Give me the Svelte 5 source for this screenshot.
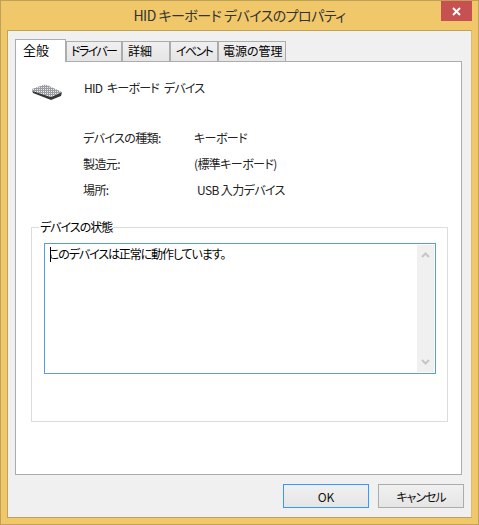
<script>
	const tabs = [
		{ label: '全般', active: true },
		{ label: 'ドライバー' },
		{ label: '詳細' },
		{ label: 'イベント' },
		{ label: '電源の管理' }
	]
	const props = [
		{ name: 'デバイスの種類:', value: 'キーボード', cls: '' },
		{ name: '製造元:', value: '(標準キーボード)', cls: '' },
		{ name: '場所:', value: 'USB 入力デバイス', cls: 'shift' }
	]
</script>

<div class="window">
	<div class="titlebar">
		<span class="title">HID キーボード デバイスのプロパティ</span>
		<button class="close" aria-label="閉じる">
			<svg viewBox="0 0 9 9" width="9" height="9"><path d="M1,1 L8,8 M8,1 L1,8" /></svg>
		</button>
	</div>
	<div class="client">
		<div class="tabs">
			{#each tabs as tab}
				<div class="tab" class:active={tab.active}>{tab.label}</div>
			{/each}
		</div>
		<div class="panel">
			<div class="device">
				<svg class="icon" viewBox="0 0 32 32" width="32" height="32">
					<defs>
						<pattern id="keys" width="2" height="2" patternUnits="userSpaceOnUse">
							<rect width="2" height="2" fill="#9a9c9f" />
							<rect width="1" height="1" fill="#e9eaeb" />
						</pattern>
					</defs>
					<path d="M1,19 L2,22 L20,29 L30,25 L31,21 L20,26 L2,20 Z" fill="#36373a" />
					<path d="M1,18 L12,14 Q13.5,13.5 16,14 L31,21 L20,26 L2,20 Z" fill="url(#keys)" />
				</svg>
				<span>HID キーボード デバイス</span>
			</div>
			<dl class="props">
				{#each props as p}
					<dt>{p.name}</dt>
					<dd class={p.cls}>{p.value}</dd>
				{/each}
			</dl>
			<fieldset class="status">
				<legend>デバイスの状態</legend>
				<div class="textbox">
					<div class="text"><span class="caret"></span>このデバイスは正常に動作しています。</div>
					<div class="scrollbar">
						<svg viewBox="0 0 9 6" width="9" height="6"><path d="M1,5 L4.5,1.5 L8,5" /></svg>
						<svg viewBox="0 0 9 6" width="9" height="6"><path d="M1,1 L4.5,4.5 L8,1" /></svg>
					</div>
				</div>
			</fieldset>
		</div>
		<div class="buttons">
			<button class="btn default">OK</button>
			<button class="btn">キャンセル</button>
		</div>
	</div>
</div>

<style>
	:global(body) {
		margin: 0;
		background: #f0c869;
	}

	.window {
		box-sizing: border-box;
		width: 479px;
		height: 525px;
		display: flex;
		flex-direction: column;
		background: #f0c869;
		border: 1px solid #bfa25a;
		font-family: "Noto Sans CJK JP", "Liberation Sans", sans-serif;
		font-feature-settings: "palt";
		font-size: 12px;
		color: #000;
	}

	.titlebar {
		height: 29px;
		flex: none;
		display: flex;
		justify-content: center;
		align-items: center;
		position: relative;
	}

	.title {
		font-size: 14px;
		letter-spacing: -0.5px;
		color: #333;
		padding-bottom: 1px;
	}

	.close {
		position: absolute;
		top: 0;
		right: 6px;
		width: 31px;
		height: 20px;
		border: 0;
		padding: 0;
		background: #c75050;
		display: flex;
		align-items: center;
		justify-content: center;
	}

	.close path {
		stroke: #fff;
		stroke-width: 2;
		fill: none;
	}

	.client {
		flex: 1;
		margin: 0 6px 6px 6px;
		background: #f0f0f0;
		border: 1px solid #bfa25a;
		border-right-color: #d8bc73;
		padding: 8px 9px 0 7px;
		display: flex;
		flex-direction: column;
	}

	.tabs {
		display: flex;
		height: 22px;
		position: relative;
		z-index: 1;
	}

	.tab {
		box-sizing: border-box;
		height: 20px;
		margin-top: 2px;
		padding-left: 4px;
		border: 1px solid #acacac;
		border-bottom: 0;
		background: linear-gradient(#f0f0f0, #e5e5e5);
		line-height: 18px;
		letter-spacing: -1.6px;
		white-space: nowrap;
	}

	.tab:nth-child(2) {
		width: 56px;
	}

	.tab:nth-child(3) {
		width: 48px;
		padding-left: 5px;
		letter-spacing: 0;
	}

	.tab:nth-child(4) {
		width: 48px;
		padding-left: 5px;
	}

	.tab:nth-child(5) {
		width: 68px;
		letter-spacing: 0;
	}

	.tab.active {
		width: 51px;
		height: 23px;
		margin-top: 0;
		padding-left: 7px;
		background: #fff;
		font-size: 13px;
		line-height: 20px;
		letter-spacing: 0;
	}

	.panel {
		box-sizing: border-box;
		height: 414px;
		flex: none;
		background: #fff;
		border: 1px solid #acacac;
		padding: 0 13px 0 15px;
		display: flex;
		flex-direction: column;
	}

	.device {
		display: flex;
		align-items: center;
		gap: 21px;
		height: 18px;
		margin-top: 16px;
		color: #222;
		letter-spacing: -0.8px;
		word-spacing: 3px;
	}

	.icon {
		flex: none;
	}

	.props {
		margin: 28px 0 0 52px;
		display: grid;
		grid-template-columns: 110px 1fr;
		grid-auto-rows: 26px;
		align-items: center;
		color: #222;
		letter-spacing: -0.6px;
	}

	dd {
		margin: 0 0 0 1px;
	}

	dd.shift {
		padding-left: 3px;
	}

	.status {
		box-sizing: border-box;
		height: 203px;
		margin: 17px 0 0;
		padding: 8px 11px 0 12px;
		border: 1px solid #dcdcdc;
		min-width: 0;
	}

	legend {
		padding: 0 1px;
		margin-left: -5px;
		line-height: 16px;
		letter-spacing: -1px;
	}

	.textbox {
		box-sizing: border-box;
		height: 131px;
		display: flex;
		background: #fff;
		border: 1px solid #569de5;
	}

	.text {
		flex: 1;
		padding: 1px 4px;
		line-height: 18px;
		letter-spacing: -1.1px;
		position: relative;
	}

	.caret {
		position: absolute;
		left: 5px;
		top: 3px;
		width: 1px;
		height: 15px;
		background: #000;
	}

	.scrollbar {
		width: 17px;
		margin: 1px;
		background: #f0f0f0;
		display: flex;
		flex-direction: column;
		align-items: center;
		justify-content: space-between;
		padding: 7px 0;
		box-sizing: border-box;
	}

	.scrollbar path {
		stroke: #c6c6c6;
		stroke-width: 2;
		fill: none;
	}

	.buttons {
		display: flex;
		justify-content: flex-end;
		gap: 9px;
		margin: 9px -2px 0 0;
	}

	.btn {
		box-sizing: border-box;
		width: 86px;
		height: 24px;
		padding: 0;
		border: 1px solid #acacac;
		background: linear-gradient(#f0f0f0, #e5e5e5);
		font: inherit;
		color: #111;
		letter-spacing: -1px;
	}

	.btn.default {
		border-color: #3399ff;
		letter-spacing: 0;
	}
</style>
